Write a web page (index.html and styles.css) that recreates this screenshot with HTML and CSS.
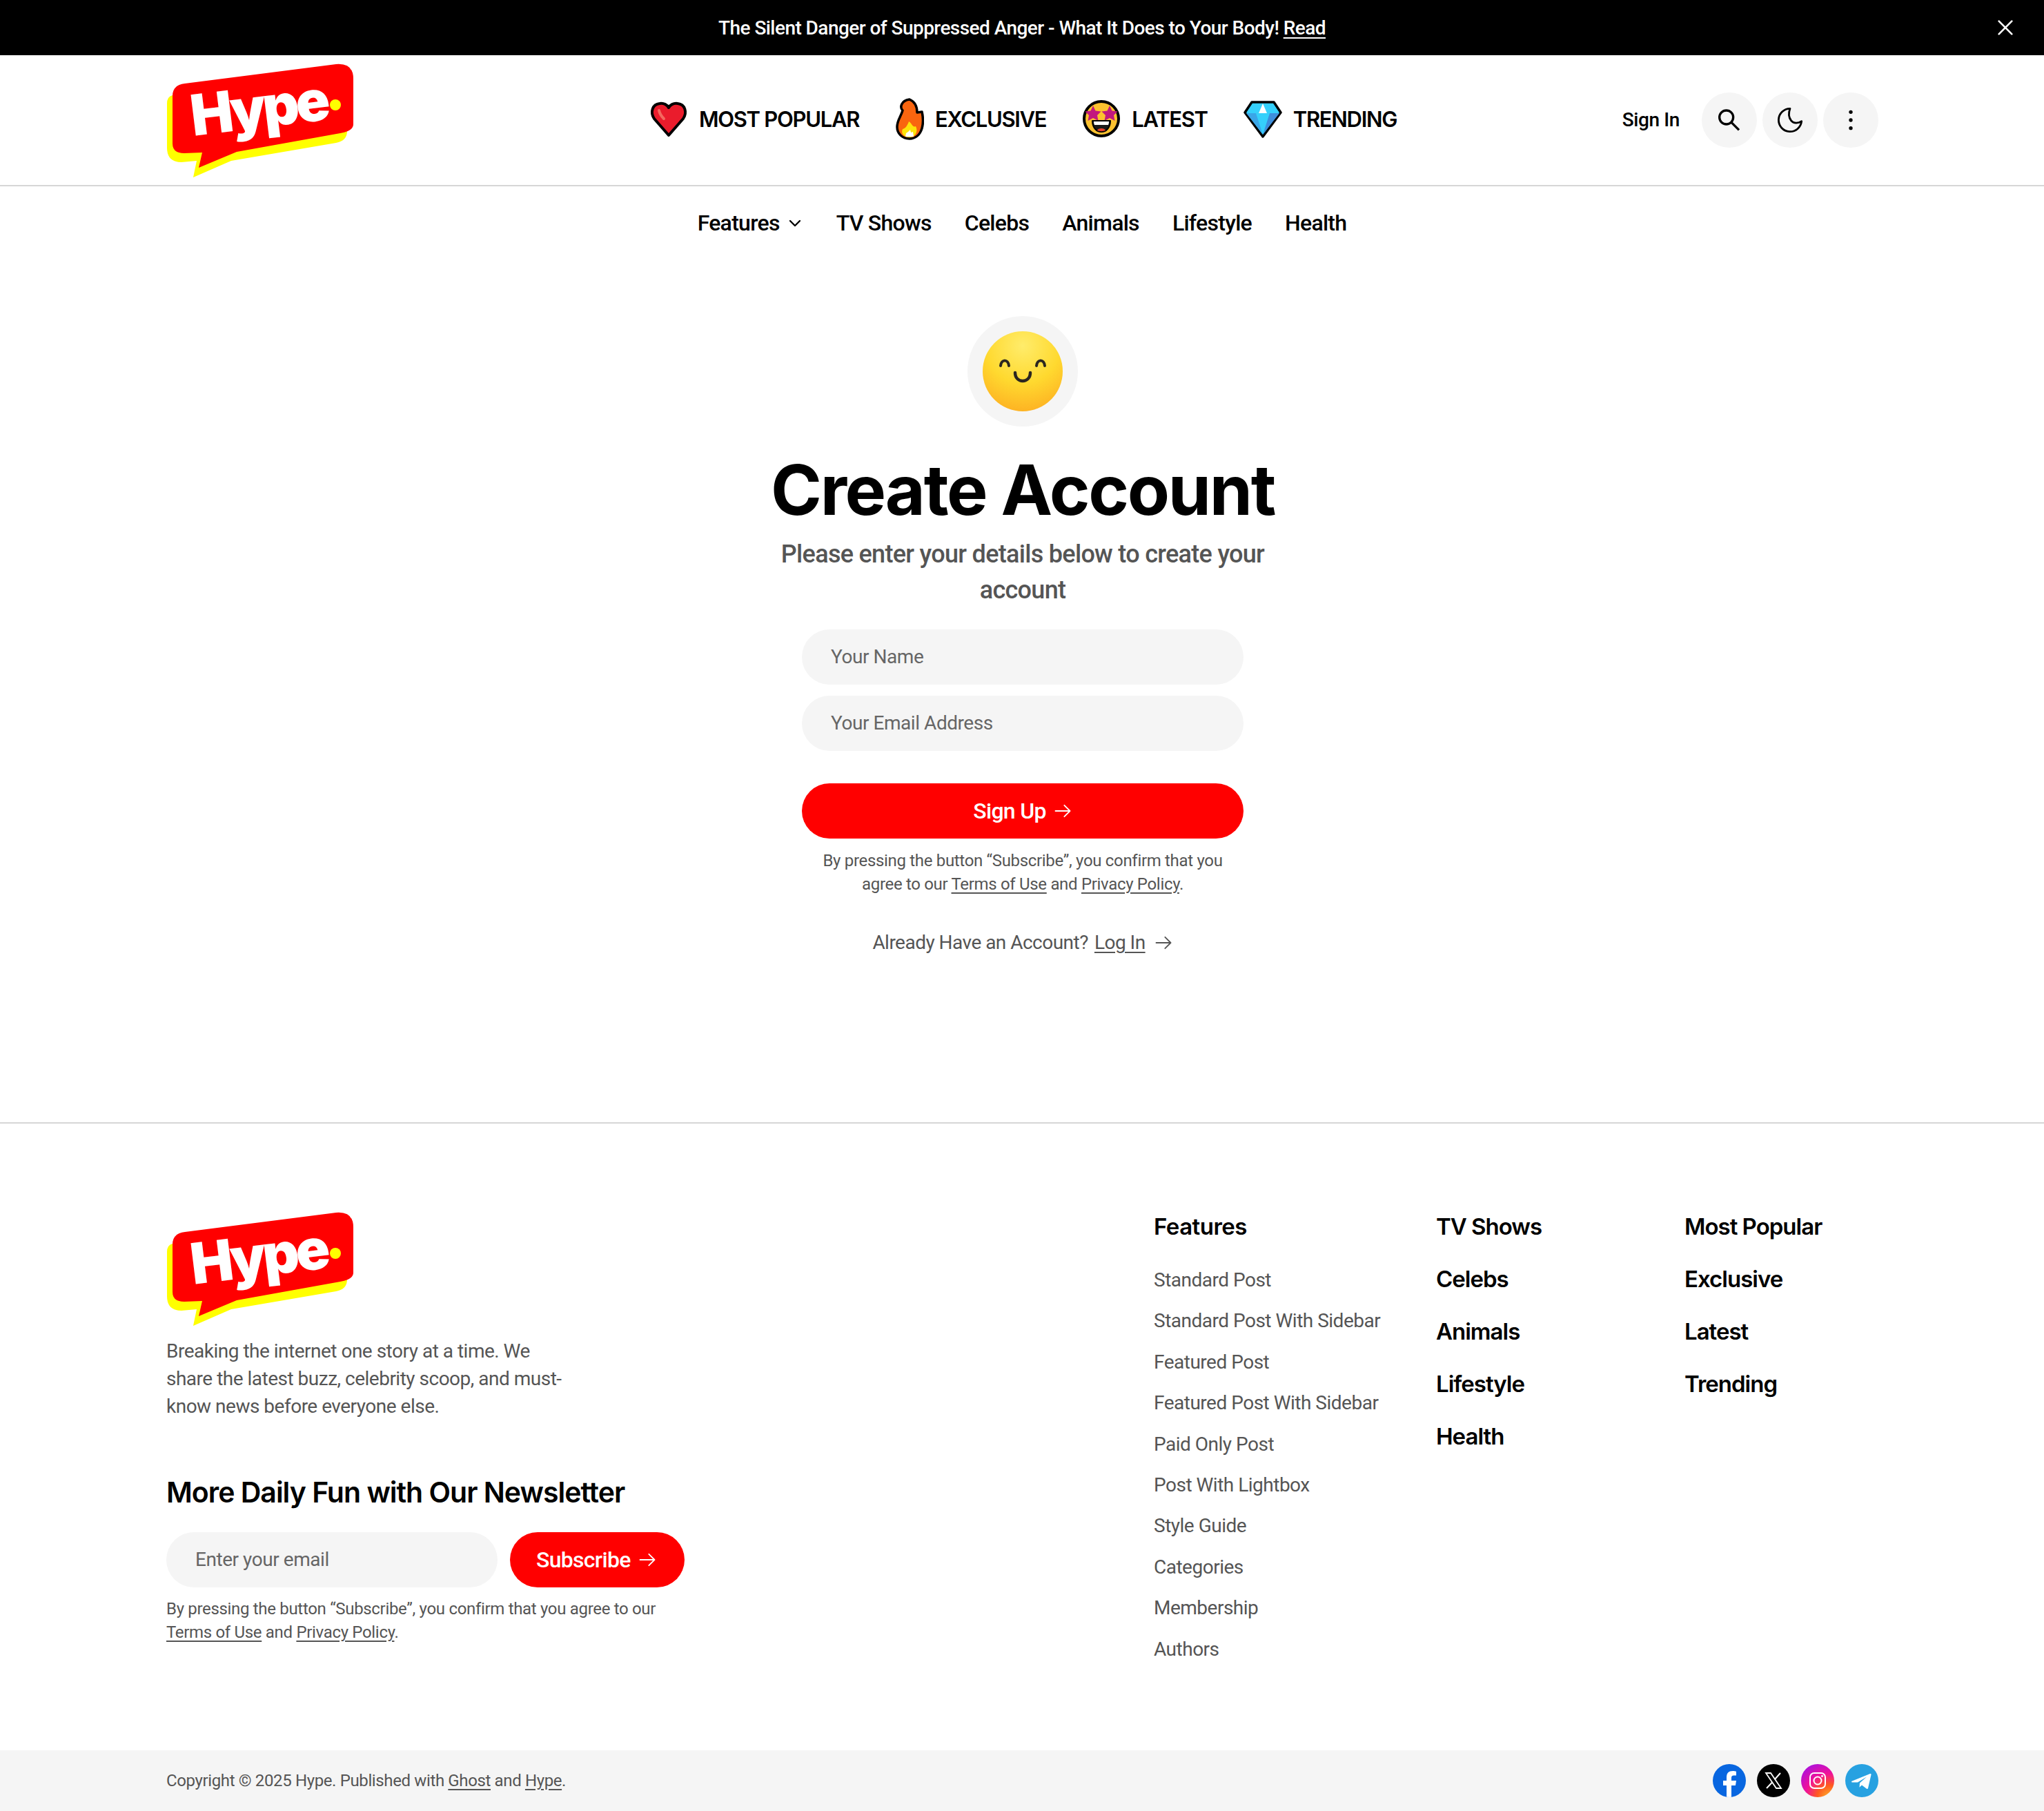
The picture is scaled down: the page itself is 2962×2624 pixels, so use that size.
FILE: index.html
```html
<!DOCTYPE html>
<html lang="en">
<head>
  <meta charset="UTF-8" />
  <meta name="viewport" content="width=device-width, initial-scale=1" />
  <title>Create Account - Hype</title>
  <link rel="stylesheet" href="styles.css">
</head>
<body>

  <div class="topbar">
    <p>The Silent Danger of Suppressed Anger - What It Does to Your Body! <a href="#">Read</a></p>
    <button class="topbar-close" aria-label="Close">
      <svg viewBox="0 0 24 24" width="32" height="32" fill="none" stroke="#fff" stroke-width="2" stroke-linecap="round"><path d="M5 5l14 14M19 5L5 19"/></svg>
    </button>
  </div>

  <header class="header">
    <a class="logo" href="#">
      <svg viewBox="0 0 272 166" width="272" height="166">
        <path d="M9 46 Q1 48 1 58 V122 Q1 143 22 143 L44 141 L39 165 L94 141 L246 115 Q262 112 262 98 V60 Z" fill="#ff0"/>
        <path d="M27 29 L246 1 Q271 -1 271 22 V88 Q271 98 252 101 L102 128 L47 151 L52 129 L26 130 Q9 130 9 116 V47 Q9 31 27 29 Z" fill="#f00"/>
        <text class="logo-word" x="0" y="0" transform="translate(39 105) rotate(-7)">Hype</text>
        <circle cx="245" cy="60" r="8" fill="#ff0"/>
      </svg>
    </a>

    <nav class="main-nav">
      <a href="#">
        <svg viewBox="0 0 56 56" width="56" height="56">
          <path d="M28 52 L7 28 C1 19 4 7 15 6 C21 5 26 8 28 12 C30 8 35 5 41 6 C52 7 55 19 49 28 Z" fill="#ea1c2c" stroke="#000" stroke-width="4" stroke-linejoin="round"/>
          <path d="M14 16 C15 21 18 25 21 28" fill="none" stroke="#f4695f" stroke-width="4" stroke-linecap="round"/>
        </svg>
        MOST POPULAR
      </a>
      <a href="#">
        <svg viewBox="0 0 42 62" width="42" height="62">
          <path d="M21 3 C28 6 32 13 32 22 L39 21 C41 30 41 38 39 45 C36 55 29 60 21 60 C10 60 3 52 3 43 C3 33 9 27 11 19 C7 15 8 5 21 3 Z" fill="#f9650f" stroke="#000" stroke-width="3.500" stroke-linejoin="round"/>
          <path d="M20 35 C25 38 25 44 30 42 C34 50 29 58 21 58 C13 58 8 52 11 46 C15 45 18 41 20 35 Z" fill="#fde30b"/>
          <path d="M19 50 L22 47 L23 51 L26 50 L27 57 L15 57 L16 52 Z" fill="#fff"/>
        </svg>
        EXCLUSIVE
      </a>
      <a href="#">
        <svg viewBox="0 0 56 56" width="56" height="56">
          <circle cx="28" cy="28" r="25" fill="#fcc22f" stroke="#000" stroke-width="4"/>
          <path d="M15 8l3.500 7.500 8 1-5.500 5.500 1.500 8-7.500-4-7.500 4 1.500-8-5.500-5.500 8-1z" fill="#c2187e" transform="translate(1 1)"/>
          <path d="M41 8l3.500 7.500 8 1-5.500 5.500 1.500 8-7.500-4-7.500 4 1.500-8-5.500-5.500 8-1z" fill="#c2187e" transform="translate(-1 1)"/>
          <path d="M15 31 H41 C41 41 35 47 28 47 C21 47 15 41 15 31 Z" fill="#1a1a1a" stroke="#000" stroke-width="2" stroke-linejoin="round"/>
          <path d="M17 32 H39 C39 34 38.500 36 38 37 H18 C17.500 36 17 34 17 32 Z" fill="#fff"/>
          <path d="M22 45 C23 41 33 41 34 45 C31 46.500 25 46.500 22 45 Z" fill="#e8412a"/>
        </svg>
        LATEST
      </a>
      <a href="#">
        <svg viewBox="0 0 56 56" width="56" height="56">
          <path d="M12 4 H44 L54 19 L28 54 L2 19 Z" fill="#35d0fb" stroke="#000" stroke-width="3.500" stroke-linejoin="round"/>
          <path d="M28 6 L34 20 H22 Z" fill="#fff"/>
          <path d="M4 20 H18 L28 51 Z" fill="#3aa6e8"/>
          <path d="M38 20 H52 L28 51 Z" fill="#3f8fdc"/>
        </svg>
        TRENDING
      </a>
    </nav>

    <div class="actions">
      <a class="signin" href="#">Sign In</a>
      <button class="round-btn" aria-label="Search">
        <svg viewBox="0 0 24 24" width="40" height="40" fill="none" stroke="#000" stroke-width="2"><circle cx="9.400" cy="9.600" r="6"/><path d="M13.800 14L20.400 20.600"/></svg>
      </button>
      <button class="round-btn" aria-label="Dark mode">
        <svg viewBox="0 0 24 24" width="40" height="40" fill="none" stroke="#000" stroke-width="1.700" stroke-linejoin="round"><path d="M12 2A10 10 0 1 0 22 13C19 15 15 15 13 12.500C11 10 10.500 6 12 2Z"/></svg>
      </button>
      <button class="round-btn" aria-label="More">
        <svg viewBox="0 0 24 24" width="40" height="40" fill="#000"><circle cx="12" cy="5" r="1.600"/><circle cx="12" cy="12" r="1.600"/><circle cx="12" cy="19" r="1.600"/></svg>
      </button>
    </div>
  </header>

  <nav class="sub-nav">
    <a href="#">Features
      <svg viewBox="0 0 24 24" width="24" height="24" fill="none" stroke="#000" stroke-width="2.400" stroke-linecap="round" stroke-linejoin="round"><path d="M5 9l7 7 7-7"/></svg>
    </a>
    <a href="#">TV Shows</a>
    <a href="#">Celebs</a>
    <a href="#">Animals</a>
    <a href="#">Lifestyle</a>
    <a href="#">Health</a>
  </nav>

  <main class="signup">
    <div class="smile-wrap">
      <svg viewBox="0 0 116 116" width="116" height="116">
        <defs>
          <radialGradient id="faceGrad" cx="50%" cy="18%" r="85%">
            <stop offset="0%" stop-color="#ffec6b"/>
            <stop offset="55%" stop-color="#ffd92f"/>
            <stop offset="100%" stop-color="#fdb022"/>
          </radialGradient>
        </defs>
        <circle cx="58" cy="58" r="58" fill="url(#faceGrad)"/>
        <path d="M26 50 C27 40 37 40 38 50" fill="none" stroke="#2b2620" stroke-width="4" stroke-linecap="round"/>
        <path d="M78 50 C79 40 89 40 90 50" fill="none" stroke="#2b2620" stroke-width="4" stroke-linecap="round"/>
        <path d="M47 60 C47 76 69 76 69 60" fill="none" stroke="#2b2620" stroke-width="4.500" stroke-linecap="round"/>
      </svg>
    </div>

    <h1>Create Account</h1>
    <p class="lead">Please enter your details below to create your account</p>

    <form class="signup-form">
      <input class="field" type="text" placeholder="Your Name" />
      <input class="field" type="email" placeholder="Your Email Address" />
      <button class="red-btn signup-btn" type="button">Sign Up
        <svg viewBox="0 0 24 24" width="28" height="28" fill="none" stroke="#fff" stroke-width="1.600" stroke-linecap="round" stroke-linejoin="round"><path d="M3 12h18M14 5l7 7-7 7"/></svg>
      </button>
    </form>

    <p class="fine center-fine">By pressing the button “Subscribe”, you confirm that you agree to our <a href="#">Terms of Use</a> and <a href="#">Privacy Policy</a>.</p>

    <p class="already">Already Have an Account? <a href="#">Log In</a>
      <svg viewBox="0 0 24 24" width="28" height="28" fill="none" stroke="#555" stroke-width="1.600" stroke-linecap="round" stroke-linejoin="round"><path d="M3 12h18M14 5l7 7-7 7"/></svg>
    </p>
  </main>

  <footer class="footer">
    <div class="footer-main">
      <div class="footer-about">
        <a class="logo" href="#">
          <svg viewBox="0 0 272 166" width="272" height="166">
            <path d="M9 46 Q1 48 1 58 V122 Q1 143 22 143 L44 141 L39 165 L94 141 L246 115 Q262 112 262 98 V60 Z" fill="#ff0"/>
            <path d="M27 29 L246 1 Q271 -1 271 22 V88 Q271 98 252 101 L102 128 L47 151 L52 129 L26 130 Q9 130 9 116 V47 Q9 31 27 29 Z" fill="#f00"/>
            <text class="logo-word" x="0" y="0" transform="translate(39 105) rotate(-7)">Hype</text>
            <circle cx="245" cy="60" r="8" fill="#ff0"/>
          </svg>
        </a>
        <p class="about-text">Breaking the internet one story at a time. We share the latest buzz, celebrity scoop, and must-know news before everyone else.</p>
        <h3>More Daily Fun with Our Newsletter</h3>
        <form class="news-form">
          <input class="field" type="email" placeholder="Enter your email" />
          <button class="red-btn" type="button">Subscribe
            <svg viewBox="0 0 24 24" width="28" height="28" fill="none" stroke="#fff" stroke-width="1.600" stroke-linecap="round" stroke-linejoin="round"><path d="M3 12h18M14 5l7 7-7 7"/></svg>
          </button>
        </form>
        <p class="fine">By pressing the button “Subscribe”, you confirm that you agree to our <a href="#">Terms of Use</a> and <a href="#">Privacy Policy</a>.</p>
      </div>

      <div class="footer-cols">
        <div class="col-features">
          <h4>Features</h4>
          <ul>
            <li><a href="#">Standard Post</a></li>
            <li><a href="#">Standard Post With Sidebar</a></li>
            <li><a href="#">Featured Post</a></li>
            <li><a href="#">Featured Post With Sidebar</a></li>
            <li><a href="#">Paid Only Post</a></li>
            <li><a href="#">Post With Lightbox</a></li>
            <li><a href="#">Style Guide</a></li>
            <li><a href="#">Categories</a></li>
            <li><a href="#">Membership</a></li>
            <li><a href="#">Authors</a></li>
          </ul>
        </div>
        <div class="col-shows">
          <a href="#">TV Shows</a>
          <a href="#">Celebs</a>
          <a href="#">Animals</a>
          <a href="#">Lifestyle</a>
          <a href="#">Health</a>
        </div>
        <div class="col-popular">
          <a href="#">Most Popular</a>
          <a href="#">Exclusive</a>
          <a href="#">Latest</a>
          <a href="#">Trending</a>
        </div>
      </div>
    </div>

    <div class="footer-bottom">
      <p>Copyright © 2025 Hype. Published with <a href="#">Ghost</a> and <a href="#">Hype</a>.</p>
      <div class="socials">
        <svg viewBox="0 0 48 48" width="48" height="48">
          <defs><clipPath id="fbClip"><circle cx="24" cy="24" r="24"/></clipPath></defs>
          <circle cx="24" cy="24" r="24" fill="#0866e0"/>
          <path clip-path="url(#fbClip)" d="M20 48 V31 H15 V24 H20 V19 C20 13 23 10 29 10 C31 10 33 10.400 34 10.700 V16.500 H30.500 C27.800 16.500 27 18 27 20 V24 H34 L33 31 H27 V48 Z" fill="#fff"/>
        </svg>
        <svg viewBox="0 0 48 48" width="48" height="48">
          <circle cx="24" cy="24" r="24"/>
          <path d="M13 13 H20 L35 35 H28 Z" fill="none" stroke="#fff" stroke-width="1.800"/>
          <path d="M34 13 L25.500 22.500 M22.500 26 L14 35" fill="none" stroke="#fff" stroke-width="2"/>
        </svg>
        <svg viewBox="0 0 48 48" width="48" height="48">
          <defs>
            <radialGradient id="igGrad" cx="85%" cy="100%" r="120%">
              <stop offset="0%" stop-color="#fdb32a"/>
              <stop offset="30%" stop-color="#ff5a1f"/>
              <stop offset="60%" stop-color="#f0129a"/>
              <stop offset="100%" stop-color="#a112e8"/>
            </radialGradient>
          </defs>
          <circle cx="24" cy="24" r="24" fill="url(#igGrad)"/>
          <rect x="13" y="13" width="22" height="22" rx="6" fill="none" stroke="#fff" stroke-width="2"/>
          <circle cx="24" cy="24" r="5.500" fill="none" stroke="#fff" stroke-width="2"/>
          <circle cx="30.500" cy="17.500" r="1.400" fill="#fff"/>
        </svg>
        <svg viewBox="0 0 48 48" width="48" height="48">
          <circle cx="24" cy="24" r="24" fill="#27a1e1"/>
          <path d="M9 25 L36 14 C37 13.600 37.800 14.300 37.500 15.500 L33 35 C32.800 36 31.800 36.300 31 35.700 L24 30.500 L20.500 33.800 L21 27.500 L31 18.500 L18 26.500 L9.500 26.500 Z" fill="#fff"/>
        </svg>
      </div>
    </div>
  </footer>

</body>
</html>
```

FILE: styles.css
```css
* {
  box-sizing: border-box;
}

body {
  margin: 0;
  font-family: Roboto, Arial, sans-serif;
  letter-spacing: -0.4px;
  color: #000;
  background-color: #fff;
}

a {
  color: inherit;
  text-decoration: none;
}

p {
  margin: 0;
}

button {
  border: none;
  cursor: pointer;
  font-family: inherit;
  letter-spacing: -0.7px;
}

/* top announcement */
.topbar {
  position: relative;
  height: 80px;
  background-color: #000;
  color: #fff;
  display: flex;
  align-items: center;
  justify-content: center;
  font-size: 28px;
  font-weight: 500;
  letter-spacing: -0.55px;
}

.topbar a {
  text-decoration: underline;
  text-underline-offset: 4px;
}

.topbar-close {
  position: absolute;
  top: 24px;
  right: 40px;
  padding: 0;
  background: none;
  line-height: 0;
}

/* header */
.header {
  height: 190px;
  padding: 12px 240px 0 241px;
  border-bottom: 2px solid #d6d6d6;
  display: grid;
  grid-template-columns: 1fr auto 1fr;
  align-items: start;
}

.logo {
  display: block;
  line-height: 0;
}

.logo-word {
  font-family: Inter, Roboto, sans-serif;
  font-weight: 900;
  font-size: 82px;
  letter-spacing: -5px;
  fill: #fff;
}

.main-nav {
  display: flex;
  gap: 52px;
  margin: 49px 0 0 2px;
  font-family: Inter, Roboto, sans-serif;
  font-size: 31px;
  font-weight: 600;
  letter-spacing: -1.300px;
}

.main-nav a {
  display: flex;
  align-items: center;
  gap: 16px;
}

.actions {
  display: flex;
  align-items: center;
  justify-content: flex-end;
  gap: 8px;
  margin-top: 42px;
}

.signin {
  font-size: 28px;
  font-weight: 500;
  margin-right: 24px;
  padding-bottom: 2px;
}

.round-btn {
  width: 80px;
  height: 80px;
  padding: 0;
  border-radius: 50%;
  background-color: #f5f5f5;
  display: flex;
  align-items: center;
  justify-content: center;
}

.sub-nav {
  height: 106px;
  display: flex;
  align-items: center;
  justify-content: center;
  gap: 48px;
  font-size: 32px;
  font-weight: 500;
  letter-spacing: -0.72px;
}

.sub-nav a {
  display: flex;
  align-items: center;
  gap: 10px;
}

/* sign up block */
.signup {
  height: 1250px;
  padding: 82px 0 0 2px;
  display: flex;
  flex-direction: column;
  align-items: center;
}

.smile-wrap {
  width: 160px;
  height: 160px;
  border-radius: 50%;
  background-color: #f5f5f5;
  display: flex;
  align-items: center;
  justify-content: center;
}

h1 {
  margin: 32px 0 0 0;
  font-family: Inter, Roboto, sans-serif;
  font-size: 100px;
  line-height: 1.2;
  font-weight: 700;
  letter-spacing: -2.300px;
}

.lead {
  width: 760px;
  margin-top: 7px;
  text-align: center;
  font-size: 36px;
  line-height: 52px;
  font-weight: 500;
  letter-spacing: -0.7px;
  color: #555;
}

.signup-form {
  width: 640px;
  margin-top: 31px;
  display: flex;
  flex-direction: column;
  gap: 16px;
}

.field {
  height: 80px;
  padding: 0 42px 2px 42px;
  border: none;
  border-radius: 40px;
  background-color: #f5f5f5;
  font-family: inherit;
  font-size: 28px;
  letter-spacing: -0.45px;
  color: #555;
}

.field::placeholder {
  color: #666;
  opacity: 1;
}

.red-btn {
  height: 80px;
  padding: 0 38px;
  border-radius: 40px;
  background-color: #f00;
  color: #fff;
  font-size: 32px;
  font-weight: 500;
  display: flex;
  align-items: center;
  justify-content: center;
  gap: 10px;
}

.signup-btn {
  margin-top: 31px;
}

.fine {
  font-size: 24px;
  line-height: 34px;
  letter-spacing: -0.32px;
  color: #555;
}

.fine a,
.footer-bottom a,
.already a {
  text-decoration: underline;
  text-underline-offset: 4px;
}

.center-fine {
  width: 640px;
  margin-top: 15px;
  text-align: center;
}

.already {
  margin-top: 48px;
  font-size: 28px;
  line-height: 40px;
  letter-spacing: -0.52px;
  color: #555;
  display: flex;
  align-items: center;
  gap: 9px;
}

.already svg {
  margin-left: 3px;
}

/* footer */
.footer-main {
  border-top: 2px solid #d6d6d6;
  height: 910px;
  padding: 126px 240px 0 241px;
  display: flex;
  justify-content: space-between;
}

.footer-about {
  width: 760px;
  margin-top: 2px;
}

.about-text {
  width: 590px;
  margin-top: 16px;
  font-size: 28px;
  line-height: 40px;
  letter-spacing: -0.5px;
  color: #555;
}

h3 {
  margin: 74px 0 0 0;
  font-family: Inter, Roboto, sans-serif;
  font-size: 41px;
  line-height: 60px;
  font-weight: 600;
  letter-spacing: -1px;
}

.news-form {
  display: flex;
  gap: 18px;
  margin-top: 28px;
  margin-bottom: 14px;
}

.news-form .field {
  width: 480px;
}

.news-form .red-btn {
  padding: 0 40px 0 38px;
}

.footer-cols {
  display: flex;
  width: 1050px;
}

.col-features {
  width: 409px;
}

.col-shows,
.col-popular {
  display: flex;
  flex-direction: column;
  gap: 30px;
  font-family: Inter, Roboto, sans-serif;
  font-size: 33px;
  line-height: 46px;
  font-weight: 600;
  letter-spacing: -1px;
}

.col-shows {
  width: 360px;
}

.col-popular {
  width: 281px;
}

h4 {
  margin: 0;
  font-family: Inter, Roboto, sans-serif;
  font-size: 33px;
  line-height: 46px;
  font-weight: 600;
  letter-spacing: -0.500px;
}

.col-features ul {
  list-style: none;
  margin: 25px 0 0 0;
  padding: 0;
  font-size: 28px;
  line-height: 59.400px;
  letter-spacing: -0.5px;
  color: #555;
}

.footer-bottom {
  height: 88px;
  padding: 0 240px 0 241px;
  background-color: #f5f5f5;
  display: flex;
  align-items: center;
  justify-content: space-between;
  font-size: 24px;
  letter-spacing: -0.37px;
  color: #555;
}

.socials {
  display: flex;
  gap: 16px;
}
```
